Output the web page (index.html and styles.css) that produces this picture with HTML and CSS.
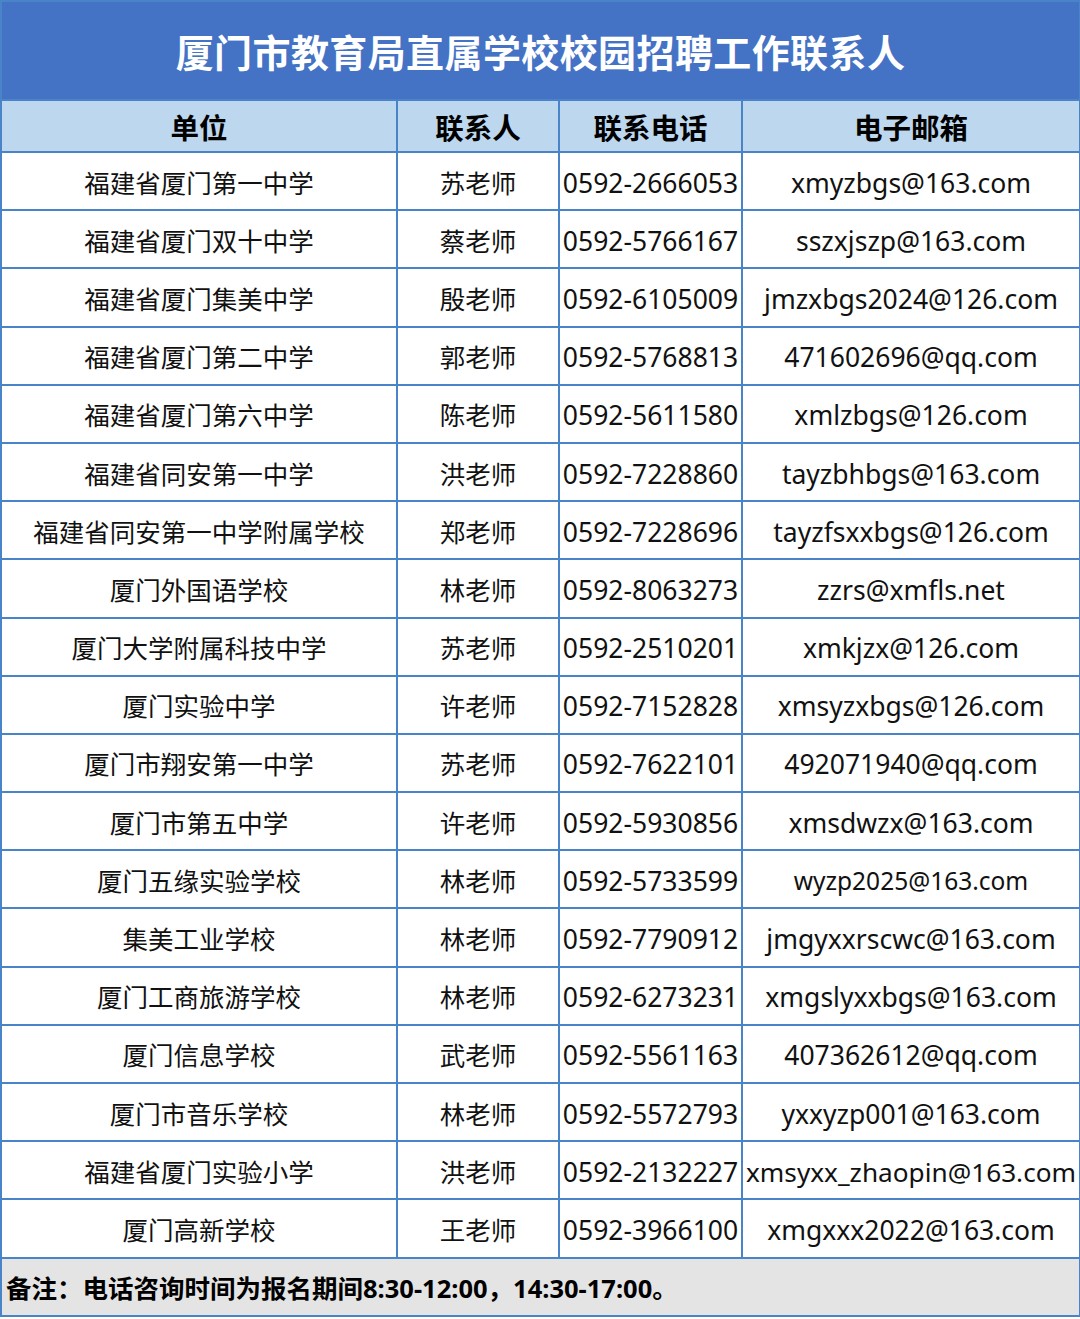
FILE: index.html
```html
<!DOCTYPE html>
<html lang="zh-CN">
<head>
<meta charset="utf-8">
<title>厦门市教育局直属学校校园招聘工作联系人</title>
<link rel="stylesheet" href="styles.css">
</head>
<body>
<table class="sheet">
  <colgroup>
    <col class="c-unit"><col class="c-person"><col class="c-phone"><col class="c-mail">
  </colgroup>
  <thead>
    <tr class="title-row"><th colspan="4" class="title">厦门市教育局直属学校校园招聘工作联系人</th></tr>
    <tr class="head-row"><th>单位</th><th>联系人</th><th>联系电话</th><th>电子邮箱</th></tr>
  </thead>
  <tbody>
    <tr><td>福建省厦门第一中学</td><td>苏老师</td><td class="lat">0592-2666053</td><td class="lat">xmyzbgs@163.com</td></tr>
    <tr><td>福建省厦门双十中学</td><td>蔡老师</td><td class="lat">0592-5766167</td><td class="lat">sszxjszp@163.com</td></tr>
    <tr><td>福建省厦门集美中学</td><td>殷老师</td><td class="lat">0592-6105009</td><td class="lat">jmzxbgs2024@126.com</td></tr>
    <tr><td>福建省厦门第二中学</td><td>郭老师</td><td class="lat">0592-5768813</td><td class="lat">471602696@qq.com</td></tr>
    <tr><td>福建省厦门第六中学</td><td>陈老师</td><td class="lat">0592-5611580</td><td class="lat">xmlzbgs@126.com</td></tr>
    <tr><td>福建省同安第一中学</td><td>洪老师</td><td class="lat">0592-7228860</td><td class="lat">tayzbhbgs@163.com</td></tr>
    <tr><td>福建省同安第一中学附属学校</td><td>郑老师</td><td class="lat">0592-7228696</td><td class="lat">tayzfsxxbgs@126.com</td></tr>
    <tr><td>厦门外国语学校</td><td>林老师</td><td class="lat">0592-8063273</td><td class="lat">zzrs@xmfls.net</td></tr>
    <tr><td>厦门大学附属科技中学</td><td>苏老师</td><td class="lat">0592-2510201</td><td class="lat">xmkjzx@126.com</td></tr>
    <tr><td>厦门实验中学</td><td>许老师</td><td class="lat">0592-7152828</td><td class="lat">xmsyzxbgs@126.com</td></tr>
    <tr><td>厦门市翔安第一中学</td><td>苏老师</td><td class="lat">0592-7622101</td><td class="lat">492071940@qq.com</td></tr>
    <tr><td>厦门市第五中学</td><td>许老师</td><td class="lat">0592-5930856</td><td class="lat">xmsdwzx@163.com</td></tr>
    <tr><td>厦门五缘实验学校</td><td>林老师</td><td class="lat">0592-5733599</td><td class="lat small">wyzp2025@163.com</td></tr>
    <tr><td>集美工业学校</td><td>林老师</td><td class="lat">0592-7790912</td><td class="lat">jmgyxxrscwc@163.com</td></tr>
    <tr><td>厦门工商旅游学校</td><td>林老师</td><td class="lat">0592-6273231</td><td class="lat">xmgslyxxbgs@163.com</td></tr>
    <tr><td>厦门信息学校</td><td>武老师</td><td class="lat">0592-5561163</td><td class="lat">407362612@qq.com</td></tr>
    <tr><td>厦门市音乐学校</td><td>林老师</td><td class="lat">0592-5572793</td><td class="lat">yxxyzp001@163.com</td></tr>
    <tr><td>福建省厦门实验小学</td><td>洪老师</td><td class="lat">0592-2132227</td><td class="lat long">xmsyxx_zhaopin@163.com</td></tr>
    <tr><td>厦门高新学校</td><td>王老师</td><td class="lat">0592-3966100</td><td class="lat">xmgxxx2022@163.com</td></tr>
  </tbody>
  <tfoot>
    <tr class="note-row"><td colspan="4" class="note">备注：电话咨询时间为报名期间8:30-12:00，14:30-17:00。</td></tr>
  </tfoot>
</table>
</body>
</html>
```
FILE: styles.css
```css
html, body {
  margin: 0;
  padding: 0;
  background: #ffffff;
}

.sheet {
  width: 1079px;
  table-layout: fixed;
  border-collapse: collapse;
  font-family: "Noto Sans", "Noto Sans CJK SC", sans-serif;
  color: #111111;
}

.c-unit { width: 396px; }
.c-person { width: 162px; }
.c-phone { width: 183px; }
.c-mail { width: 338px; }

.sheet th,
.sheet td {
  border: 2px solid #4a84c8;
  padding: 0;
  text-align: center;
  vertical-align: middle;
  white-space: nowrap;
  overflow: hidden;
}

.title-row { height: 99px; }

.title {
  background: #4472c4;
  color: #ffffff;
  font-family: "Noto Sans CJK SC", sans-serif;
  font-size: 38px;
  font-weight: 700;
  letter-spacing: 0.4px;
  border-color: #3f6fba;
}

.head-row { height: 52px; }

.head-row th {
  background: #bdd7ee;
  font-family: "Noto Sans CJK SC", sans-serif;
  font-size: 28.5px;
  font-weight: 700;
  color: #000000;
}

tbody tr { height: 58.2px; }

tbody td {
  font-size: 25.5px;
  font-weight: 400;
}

tbody td.lat {
  font-size: 26.5px;
  padding-top: 3px;
}

tbody td.small { font-size: 24.5px; }

tbody td.long { font-size: 26.2px; }

.note-row { height: 58px; }

.note {
  background: #e4e4e4;
  text-align: left !important;
  padding-left: 4px !important;
  font-size: 25.5px;
  font-weight: 700;
  color: #000000;
}
```
